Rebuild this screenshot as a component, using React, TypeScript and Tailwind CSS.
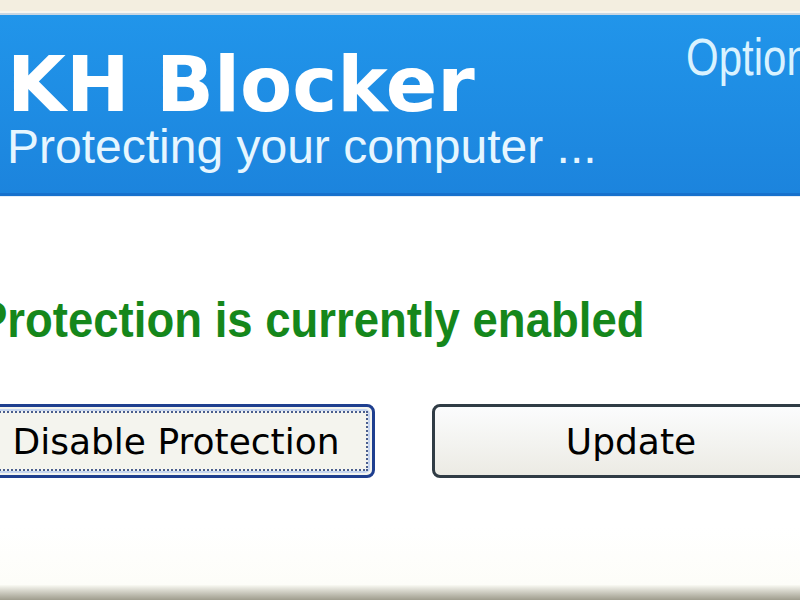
import React from "react";

export default function App() {
  return (
    <div className="relative flex h-[600px] w-[800px] flex-col overflow-hidden bg-white">
      {/* top strip of window chrome */}
      <div className="h-[11px] shrink-0 bg-[#f3eee0]" />
      <div className="h-[2px] shrink-0 bg-[#f7f6f0]" />
      <div className="h-[2px] shrink-0 bg-[#c9d6e2]" />

      {/* blue header */}
      <div className="flex h-[181px] shrink-0 overflow-hidden border-b-[3px] border-[#1771cc] bg-gradient-to-b from-[#2195ea] to-[#1c84dd]">
        <div className="flex w-[686px] shrink-0 flex-col pl-[7px] pt-[32px]">
          <div
            className="h-[76px] whitespace-nowrap text-[76px] font-bold leading-[76px] text-white"
            style={{ fontFamily: '"DejaVu Sans", Verdana, sans-serif' }}
          >
            KH Blocker
          </div>
          <div
            className="h-[48px] whitespace-nowrap text-[48px] leading-[48px] text-[#e6f6ff]"
            style={{ fontFamily: '"Liberation Sans", Arial, sans-serif' }}
          >
            Protecting your computer ...
          </div>
        </div>
        <div className="pt-[16px]">
          <div
            className="origin-top scale-y-125 whitespace-nowrap text-[42px] leading-[42px] text-[#d9f2ff]"
            style={{ fontFamily: '"Liberation Sans", Arial, sans-serif' }}
          >
            Options
          </div>
        </div>
      </div>
      <div className="h-[1px] shrink-0 bg-[#e3eef8]" />

      {/* main body */}
      <div className="flex flex-1 flex-col bg-gradient-to-b from-white from-85% to-[#fdfdf8]">
        <div className="ml-[-23px] mt-[98px] h-[50px]">
          <div
            className="origin-left scale-x-[0.91] whitespace-nowrap text-[50px] font-bold leading-[50px] text-[#15871b]"
            style={{ fontFamily: '"Liberation Sans", Arial, sans-serif' }}
          >
            Protection is currently enabled
          </div>
        </div>

        <div className="ml-[-23px] mt-[59px] flex gap-[57px]">
          <div className="flex h-[74px] w-[398px] shrink-0 rounded-[8px] border-[3px] border-[#1f3f8f] bg-[#f4f4ee] p-[2px]">
            <div className="flex flex-1 items-center justify-center rounded-[5px] border-2 border-[#c7d6f0]">
              <div className="flex h-full w-full items-center justify-center border-2 border-dotted border-[#4a5e8e]">
                <span
                  className="whitespace-nowrap pt-[2px] text-[36px] leading-[40px] text-black"
                  style={{ fontFamily: '"DejaVu Sans", Verdana, sans-serif' }}
                >
                  Disable Protection
                </span>
              </div>
            </div>
          </div>
          <div className="flex h-[74px] w-[398px] shrink-0 items-center justify-center rounded-[8px] border-[3px] border-[#303c45] bg-gradient-to-b from-[#fbfcfd] to-[#ecebe4]">
            <span
              className="whitespace-nowrap pt-[2px] text-[36px] leading-[40px] text-black"
              style={{ fontFamily: '"DejaVu Sans", Verdana, sans-serif' }}
            >
              Update
            </span>
          </div>
        </div>
      </div>

      {/* bottom edge */}
      <div className="h-[15px] shrink-0 bg-gradient-to-b from-[#fafaf3] to-[#9f9d8e]" />
    </div>
  );
}
